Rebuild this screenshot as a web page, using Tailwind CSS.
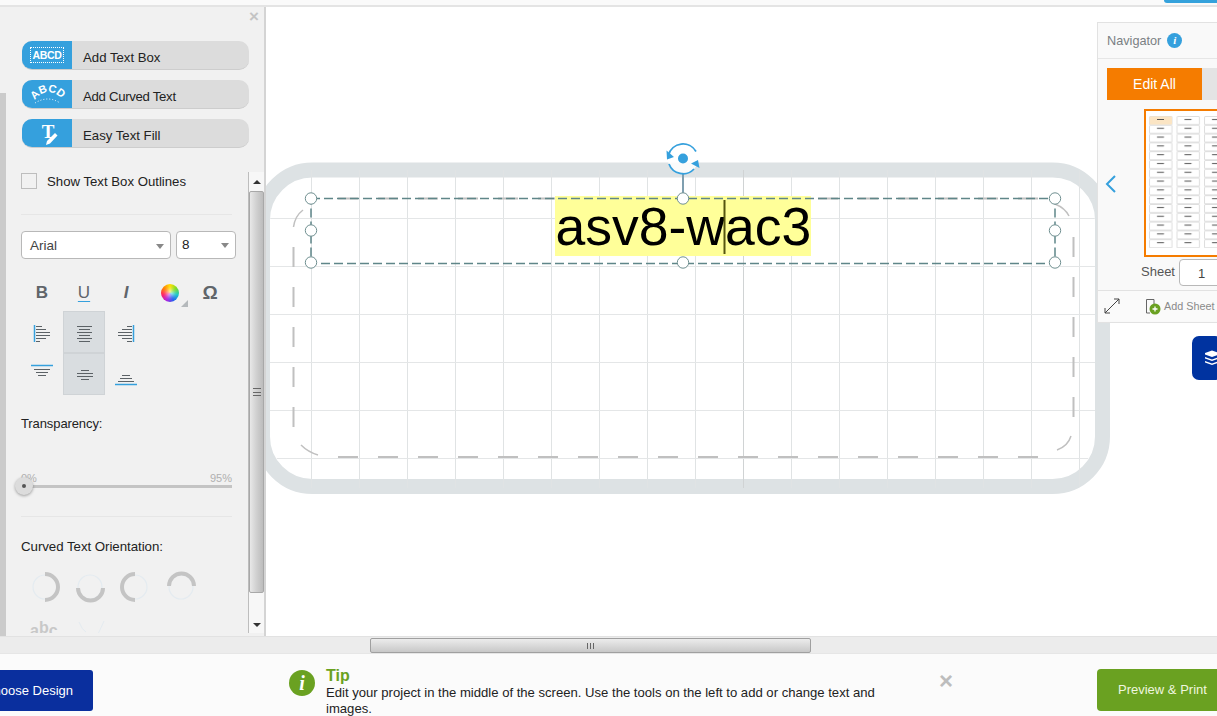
<!doctype html>
<html lang="en">
<head>
  <meta charset="UTF-8" />
  <script src="https://cdn.jsdelivr.net/npm/@tailwindcss/browser@4"></script>
  <title>Label editor</title>
</head>
<body class="w-[1217px] h-[716px] overflow-hidden bg-white flex flex-col font-['Liberation_Sans',Arial,sans-serif] text-[#222]">

  <!-- top strip -->
  <div class="h-[7px] shrink-0 relative border-b-2 border-[#e4e4e4] bg-[#fafafa]">
    <div class="absolute right-0 top-0 w-[53px] h-[3px] bg-[#35a2dc] rounded-bl"></div>
  </div>

  <div class="relative h-[629px] shrink-0 flex">
    <!-- left tools panel -->
    <aside class="relative z-10 w-[266px] h-full shrink-0 bg-[#f1f1f1] border-r-2 border-[#d4d4d4] overflow-hidden">
      <div class="absolute left-0 top-[86px] bottom-0 w-[6px] bg-[#cbcbcb]"></div>
      <span class="absolute left-[249px] top-[1px] text-[#c4c4c4] text-[17px] font-bold leading-[17px]">×</span>

      <div class="pt-[34px] pl-[22px] flex flex-col gap-[10px]">
        <button class="flex w-[227px] h-[29px] rounded-[10px] bg-[#dcdcdc] border-b border-[#cdcdcd] overflow-hidden items-center text-left text-[13.200px] text-[#222]">
          <span class="w-[50px] h-[29px] bg-[#35a0dd] flex items-center justify-center mr-[11px] shrink-0">
            <span class="border border-dotted border-white text-white text-[10.500px] font-bold leading-[14px] px-[1px] tracking-[-0.3px]">ABCD</span>
          </span>
          <span class="mt-[5px]">Add Text Box</span>
        </button>
        <button class="flex w-[227px] h-[29px] rounded-[10px] bg-[#dcdcdc] border-b border-[#cdcdcd] overflow-hidden items-center text-left text-[13.200px] text-[#222]">
          <span class="w-[50px] h-[29px] bg-[#35a0dd] mr-[11px] shrink-0">
            <svg width="50" height="29" viewBox="0 0 50 29">
              <path id="arc" d="M12 21 Q26 3 42 21" fill="none" />
              <text font-family="Liberation Sans" font-size="11" font-weight="bold" fill="#fff"><textPath href="#arc" startOffset="1">ABCD</textPath></text>
              <path d="M13 23 Q26 15 38 23" fill="none" stroke="#fff" stroke-width="1" stroke-dasharray="1 2" />
            </svg>
          </span>
          <span class="mt-[5px] tracking-[-0.3px]">Add Curved Text</span>
        </button>
        <button class="flex w-[227px] h-[29px] rounded-[10px] bg-[#dcdcdc] border-b border-[#cdcdcd] overflow-hidden items-center text-left text-[13.200px] text-[#222]">
          <span class="w-[50px] h-[29px] bg-[#35a0dd] mr-[11px] shrink-0">
            <svg width="50" height="29" viewBox="0 0 50 29">
              <text x="26" y="19" text-anchor="middle" font-family="Liberation Serif" font-size="19" font-weight="bold" fill="#fff">T</text>
              <path d="M25 22 L33 14 L35.500 16.500 L28 24.500 L24 26 Z" fill="#fff" />
            </svg>
          </span>
          <span class="mt-[5px]">Easy Text Fill</span>
        </button>
      </div>

      <!-- scrolling options -->
      <div class="absolute left-0 top-[165px] w-[264px] h-[461px] overflow-hidden">
        <div class="absolute right-0 top-0 w-[16px] h-[461px] bg-[#f7f7f7] border-l border-[#bdbdbd]">
          <div class="h-[19px] flex items-center justify-center"><div class="w-0 h-0 border-x-[4px] border-x-transparent border-b-[4px] border-b-[#333]"></div></div>
          <div class="h-[402px] border border-[#a8a8a8] rounded-[2px] bg-gradient-to-r from-[#e8e8e8] via-[#d0d0d0] to-[#bcbcbc] flex items-center justify-center">
            <div class="w-[8px] h-[8px] border-y border-[#666] flex items-center"><div class="w-full h-px bg-[#666]"></div></div>
          </div>
          <div class="h-[40px] flex items-end justify-center pb-[6px]"><div class="w-0 h-0 border-x-[4px] border-x-transparent border-t-[4px] border-t-[#333]"></div></div>
        </div>

        <div class="pl-[21px] w-[236px]">
          <label class="flex items-center h-[18px] text-[13.200px]">
            <span class="w-[16px] h-[16px] border border-[#bdbdbd] mr-[10px]"></span>
            <span class="pt-[1px]">Show Text Box Outlines</span>
          </label>
          <div class="w-[211px] h-px bg-[#e6e6e6] mt-[24px]"></div>

          <div class="flex gap-[5px] mt-[16px]">
            <div class="w-[150px] h-[28px] rounded-[4px] bg-white border border-[#b8b8b8] flex items-center justify-between pl-[8px] pr-[6px] pt-[2px] text-[13.500px] text-[#444]">
              Arial
              <span class="w-0 h-0 border-x-[4px] border-x-transparent border-t-[5px] border-t-[#888]"></span>
            </div>
            <div class="w-[60px] h-[28px] rounded-[4px] bg-white border border-[#b8b8b8] flex items-center justify-between pl-[5px] pr-[6px] text-[13.500px] text-[#222]">
              8
              <span class="w-0 h-0 border-x-[4px] border-x-transparent border-t-[5px] border-t-[#888]"></span>
            </div>
          </div>

          <!-- text style -->
          <div class="flex items-center h-[24px] mt-[22px] text-[#60656a] text-[17px]">
            <span class="w-[42px] text-center font-bold">B</span>
            <span class="w-[42px] text-center underline decoration-[#35a0dd] underline-offset-[3px]">U</span>
            <span class="w-[42px] text-center italic font-bold">I</span>
            <span class="relative w-[18px] h-[18px] ml-[14px] rounded-full bg-[conic-gradient(#ffe000,#7ddc1f,#18c8c8,#2060f0,#b020e0,#ff2060,#ff8000,#ffe000)]">
              <span class="absolute left-[5px] top-[5px] w-[8px] h-[8px] rounded-full bg-white/70 blur-[2px]"></span>
              <span class="absolute left-[20px] top-[16px] w-0 h-0 border-l-[7px] border-l-transparent border-b-[7px] border-b-[#b5b9bc]"></span>
            </span>
            <span class="ml-[22px] w-[18px] text-center font-bold text-[19px]">Ω</span>
          </div>

          <!-- alignment -->
          <div class="grid grid-cols-[42px_42px_42px] grid-rows-[42px_42px] mt-[6px] w-[126px]">
            <svg width="42" height="42" stroke="#5c6266" stroke-width="1"><path d="M13.500 14V31" stroke="#35a0dd" stroke-width="1.500"/><path d="M15 15.500h6M15 18.500h10M15 21.500h14M15 24.500h14M15 27.500h10M15 30.500h4"/></svg>
            <svg class="bg-[#d9dde0] border border-[#cfd3d6]" width="42" height="42" stroke="#5c6266" stroke-width="1"><path d="M13 14.500h15M15 17.500h11M13 20.500h15M15 23.500h11M13 26.500h15M15 29.500h11"/></svg>
            <svg width="42" height="42" stroke="#5c6266" stroke-width="1"><path d="M28.500 14V31" stroke="#35a0dd" stroke-width="1.500"/><path d="M22 15.500h5M17 18.500h10M13 21.500h14M13 24.500h14M17 27.500h10M22 30.500h5"/></svg>
            <svg width="42" height="42" stroke="#5c6266" stroke-width="1"><path d="M10 12.500h22" stroke="#35a0dd" stroke-width="1.500"/><path d="M13 16.500h16M15 19.500h12M17 22.500h8"/></svg>
            <svg class="bg-[#d9dde0] border border-[#cfd3d6]" width="42" height="42" stroke="#5c6266" stroke-width="1"><path d="M17 16.500h8M13 19.500h16M13 22.500h16M17 25.500h8"/></svg>
            <svg width="42" height="42" stroke="#5c6266" stroke-width="1"><path d="M10 31.500h22" stroke="#35a0dd" stroke-width="1.500"/><path d="M17 22.500h8M15 25.500h12M13 28.500h16"/></svg>
          </div>

          <p class="text-[13px] tracking-[-0.1px] leading-[16px] mt-[21px]">Transparency:</p>

          <!-- slider -->
          <div class="relative w-[211px] h-[36px] mt-[40px] text-[11px] leading-[12px] text-[#b0b0b0]">
            <span class="absolute left-0 top-0">0%</span>
            <span class="absolute right-0 top-0">95%</span>
            <div class="absolute left-0 right-0 top-[13px] h-[3px] bg-[#c4c4c4]"></div>
            <div class="absolute left-[-6px] top-[5px] w-[18px] h-[18px] rounded-full bg-[#dcdcdc] shadow-[0_1px_3px_rgba(0,0,0,0.35)] flex items-center justify-center"><div class="w-[4px] h-[4px] rounded-full bg-[#555]"></div></div>
          </div>

          <div class="w-[211px] h-px bg-[#e6e6e6] mt-[8px]"></div>
          <p class="text-[13.300px] tracking-[-0.05px] leading-[16px] mt-[22px]">Curved Text Orientation:</p>

          <svg class="mt-[7px] -ml-[21px]" width="230" height="75" fill="none">
            <g stroke="#e4ebf0" stroke-width="1.200"><circle cx="45" cy="25" r="12"/><circle cx="90" cy="25" r="12"/><circle cx="135" cy="25" r="12"/><circle cx="181" cy="25" r="12"/></g>
            <g stroke="#c4c4c4" stroke-width="4">
              <path d="M45 12A12.500 12.500 0 0 1 45 38"/>
              <path d="M78 26A12.500 12.500 0 0 0 103 26"/>
              <path d="M135 12A12.500 12.500 0 0 0 135 38"/>
              <path d="M169 24A12.500 12.500 0 0 1 194 24"/>
            </g>
            <text x="30" y="72" font-family="Liberation Sans" font-size="16" font-weight="bold" fill="#c8c8c8"><tspan dy="2">a</tspan><tspan dy="-3">b</tspan><tspan dy="3">c</tspan></text>
            <path d="M79 60Q82 68 86 70M104 59Q101 66 98 72" stroke="#e4ebf0" />
          </svg>
        </div>
      </div>
    </aside>

    <!-- label canvas -->
    <main class="relative flex-1">
      <svg class="absolute left-[-266px] top-[-7px]" width="1217" height="636" fill="none">
        <defs>
          <clipPath id="lbl"><rect x="255" y="163" width="855" height="331" rx="58"/></clipPath>
          <clipPath id="inner"><rect x="270" y="177" width="825" height="302" rx="44"/></clipPath>
        </defs>
        <rect x="262.500" y="170" width="840" height="316.500" rx="50" stroke="#dde2e4" stroke-width="15"/>
        <g clip-path="url(#lbl)" stroke="#e0e3e4" stroke-width="1">
          <path d="M311.500 170V488M359.500 170V488M407.500 170V488M455.500 170V488M503.500 170V488M551.500 170V488M599.500 170V488M647.500 170V488M695.500 170V488M791.500 170V488M839.500 170V488M887.500 170V488M935.500 170V488M983.500 170V488M1031.500 170V488M1079.500 170V488"/>
          <path d="M743.500 170V488" stroke="#d0d3d4"/>
        </g>
        <g clip-path="url(#inner)" stroke="#e4e6e7" stroke-width="1">
          <path d="M262 218.500H1103M262 266.500H1103M262 314.500H1103M262 362.500H1103M262 410.500H1103M262 458.500H1103"/>
        </g>

        <!-- safe area dashes -->
        <g stroke="#c0c0c0" stroke-width="2">
          <path d="M1038 457H338M338 198.500H1040M293.500 247V427M1073.500 237V417" stroke-dasharray="20 20"/>
          <path d="M293.500 227Q295 216 303 210M1055 204Q1065 208 1069 216M301 445Q308 452 318 455M1057 450Q1068 446 1071 436" stroke-width="1.500"/>
        </g>

        <rect x="555" y="196" width="256" height="60" fill="#ffff99"/>
        <text x="555.500" y="245" font-family="Liberation Sans" font-size="53.500" fill="#000">asv8-wac3</text>
        <path d="M724.500 200V254" stroke="#55550f" stroke-width="2"/>

        <rect x="311" y="198.500" width="744" height="65" stroke="#5f8689" stroke-width="1.500" stroke-dasharray="9 4"/>
        <path d="M683 172V198" stroke="#7f9fb0" stroke-width="2"/>
        <g fill="#fff" stroke="#6f8f90" stroke-width="1">
          <circle cx="311" cy="198.500" r="5.700"/><circle cx="683" cy="198.500" r="5.700"/><circle cx="1055" cy="198.500" r="5.700"/>
          <circle cx="311" cy="230.500" r="5.700"/><circle cx="1055" cy="230.500" r="5.700"/>
          <circle cx="311" cy="262.500" r="5.700"/><circle cx="683" cy="262.500" r="5.700"/><circle cx="1055" cy="262.500" r="5.700"/>
        </g>
        <!-- rotate handle -->
        <circle cx="683" cy="159" r="15" fill="#fff" fill-opacity="0.85"/>
        <path d="M668.500 155A15 15 0 0 1 696 151.500M669 164A15 15 0 0 0 694 169" stroke="#35a0dd" stroke-width="1.800"/>
        <path d="M666.500 150.500L674 157L667 159.500ZM699.500 168L691 163.500L698 160Z" fill="#35a0dd"/>
        <circle cx="683" cy="158.500" r="5" fill="#35a0dd"/>
      </svg>
    </main>

    <!-- navigator -->
    <section class="absolute z-10 left-[1097px] top-[15px] w-[130px] h-[301px] bg-[#f9f9f9] border border-[#e2e2e2]">
      <div class="h-[36px] border-b border-[#e6e6e6] flex items-center pl-[9px] text-[12.700px] text-[#7a7f83]">
        <span class="pt-[2px]">Navigator</span>
        <span class="ml-[6px] w-[15px] h-[15px] rounded-full bg-[#35a0dd] text-white text-[11px] font-bold italic font-['Liberation_Serif',serif] flex items-center justify-center">i</span>
      </div>
      <div class="flex ml-[9px] mt-[9px] h-[32px]">
        <div class="w-[95px] bg-[#f57c00] text-white text-[14px] flex items-center justify-center">Edit All</div>
        <div class="flex-1 bg-[#e4e4e4]"></div>
      </div>
      <div class="relative h-[157px]">
        <svg class="absolute left-[6px] top-[74px]" width="14" height="22" fill="none"><path d="M11 2L3 10L11 18" stroke="#35a0dd" stroke-width="2"/></svg>
        <svg class="absolute left-[46px] top-[9px]" width="84" height="148">
          <defs>
            <pattern id="cell" width="27.500" height="8.800" patternUnits="userSpaceOnUse" x="5" y="7">
              <rect x="0.500" y="0.500" width="22.500" height="8" rx="1" fill="#fff" stroke="#dedede"/>
              <path d="M8 3.500h7" stroke="#555" stroke-width="1"/>
            </pattern>
          </defs>
          <rect x="1" y="1" width="90" height="146" fill="#fff" stroke="#f57c00" stroke-width="2"/>
          <rect x="5" y="7" width="82" height="132" fill="url(#cell)"/>
          <rect x="5.500" y="7.500" width="22.500" height="8" rx="1" fill="#fbe5c4"/>
          <path d="M13 10.500h7" stroke="#555"/>
        </svg>
      </div>
      <div class="flex items-center h-[30px] pl-[43px]">
        <span class="text-[13px] text-[#555]">Sheet</span>
        <div class="ml-[4px] w-[50px] h-[27px] bg-white border border-[#b8b8b8] rounded-[4px] text-[13px] text-[#444] pl-[18px] leading-[27px] shrink-0">1</div>
      </div>
      <div class="h-[31px] mt-[3px] border-t border-[#e2e2e2] flex items-center bg-[#fafafa]">
        <svg class="ml-[6px]" width="16" height="16" fill="none" stroke="#444"><path d="M1 15L15 1M1 10V15H6M10 1H15V6"/></svg>
        <svg class="ml-[25px]" width="16" height="17" fill="none"><path d="M1.500 1.500H9V6M1.500 1.500V15H5" stroke="#666"/><circle cx="10" cy="11" r="5.500" fill="#6aa121"/><path d="M7.500 11h5M10 8.500v5" stroke="#fff" stroke-width="1.300"/></svg>
        <span class="ml-[3px] pt-[1px] text-[10.800px] text-[#8a8a8a] whitespace-nowrap">Add Sheet</span>
      </div>
    </section>

    <!-- layers tab -->
    <div class="absolute z-10 left-[1192px] top-[329px] w-[30px] h-[44px] rounded-[7px] bg-[#0033a0] flex items-center pl-[13px]">
      <svg width="14" height="16" fill="#fff"><path d="M0 3L7 0.500L14 3V4.500L7 7L0 4.500ZM0 7L7 9.500L14 7V8.500L7 11L0 8.500ZM0 11L7 13.500L14 11V12.500L7 15L0 12.500Z"/></svg>
    </div>
  </div>

  <!-- horizontal scrollbar -->
  <div class="h-[17px] shrink-0 bg-[#ececec] border-t border-[#e2e2e2] relative flex">
    <div class="ml-[370px] mt-[1px] w-[441px] h-[15px] border border-[#a0a0a0] rounded-[2px] bg-gradient-to-b from-[#ececec] to-[#c8c8c8] flex items-center justify-center">
      <div class="w-[7px] h-[6px] border-x border-[#666] flex justify-center"><div class="w-px h-full bg-[#666]"></div></div>
    </div>
  </div>

  <!-- tip bar -->
  <footer class="relative flex-1 bg-[#fbfbfb] border-t border-[#e6e6e6] flex items-start">
    <div class="mt-[16px] ml-[-20px] w-[113px] h-[41px] rounded-[3px] bg-[#0a2f9e] text-white text-[13px] whitespace-nowrap flex items-center justify-end pr-[20px] shrink-0">Choose Design</div>
    <div class="ml-[196px] mt-[16px] w-[26px] h-[26px] rounded-full bg-[#6aa121] text-white italic font-bold text-[20px] font-['Liberation_Serif',serif] flex items-center justify-center shrink-0">i</div>
    <div class="ml-[11px] mt-[13px] w-[565px] shrink-0">
      <p class="text-[16px] font-bold leading-[18px] text-[#6aa121]">Tip</p>
      <p class="text-[13.100px] leading-[16px] text-[#222]">Edit your project in the middle of the screen. Use the tools on the left to add or change text and images.</p>
    </div>
    <span class="ml-[48px] mt-[15px] text-[#bdbdbd] text-[24px] font-bold leading-[24px] shrink-0">×</span>
    <div class="absolute left-[1097px] top-[15px] w-[130px] h-[42px] rounded-[4px] bg-[#6aa121] text-[#eef6df] text-[13px] flex items-center pl-[21px]">Preview &amp; Print</div>
  </footer>
</body>
</html>
